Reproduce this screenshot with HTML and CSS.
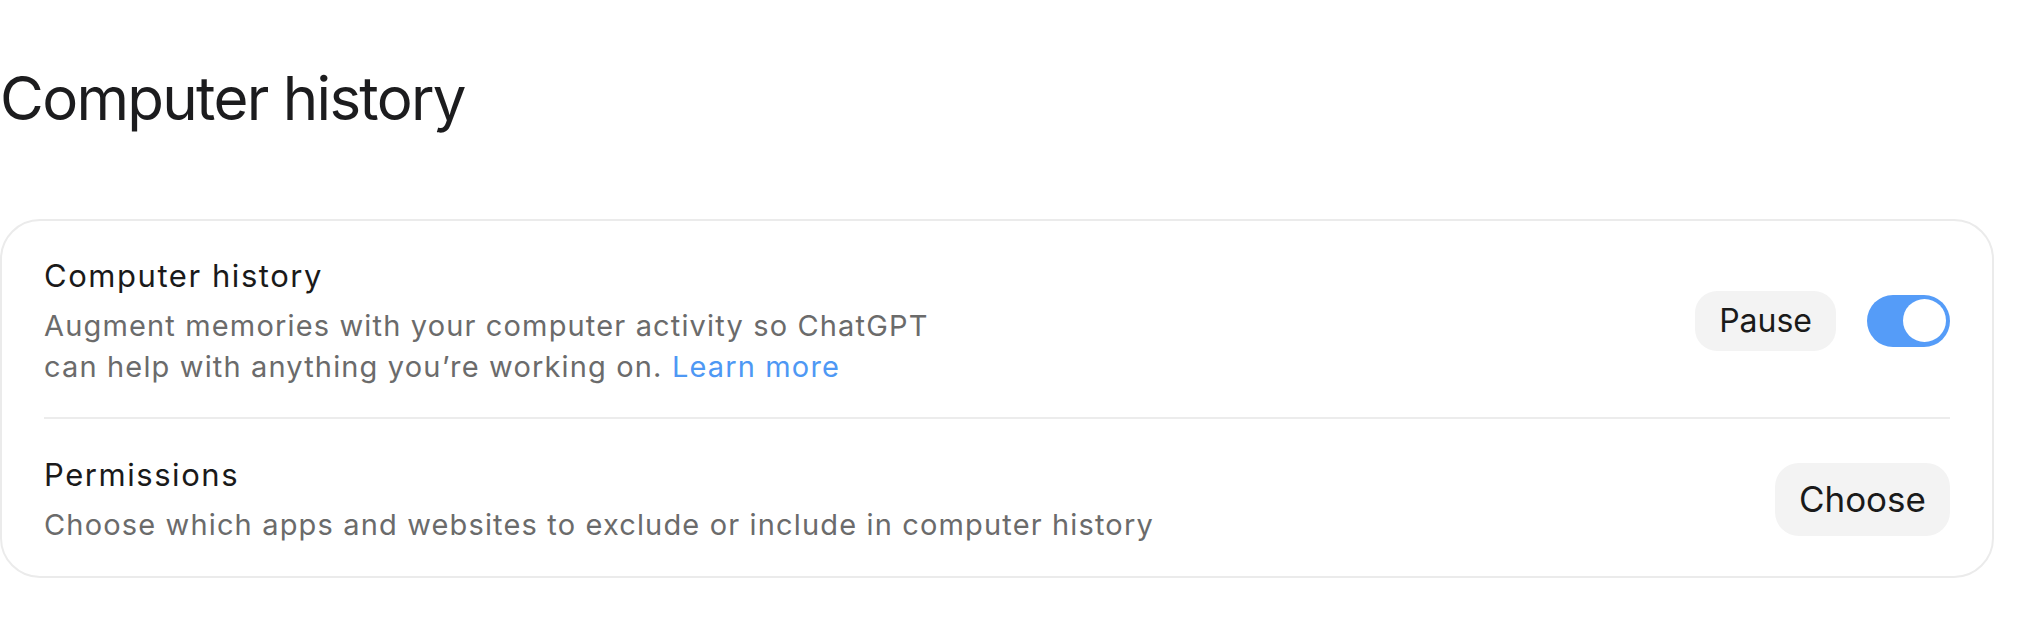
FILE: index.html
```html
<!DOCTYPE html>
<html lang="en">
<head>
<meta charset="utf-8">
<title>Computer history</title>
<link rel="stylesheet" href="styles.css">
</head>
<body>
<main class="page">
  <h1 class="page-title">Computer history</h1>
  <section class="card">
    <div class="row row-first">
      <div class="row-text">
        <div class="row-title">Computer history</div>
        <div class="row-desc">Augment memories with your computer activity so ChatGPT<br>can help with anything you’re working on. <a class="link" href="#">Learn more</a></div>
      </div>
      <div class="row-controls">
        <button class="btn btn-pause" type="button">Pause</button>
        <span class="toggle" role="switch" aria-checked="true"><span class="knob"></span></span>
      </div>
    </div>
    <div class="row">
      <div class="row-text">
        <div class="row-title">Permissions</div>
        <div class="row-desc">Choose which apps and websites to exclude or include in computer history</div>
      </div>
      <div class="row-controls">
        <button class="btn btn-choose" type="button">Choose</button>
      </div>
    </div>
  </section>
</main>
</body>
</html>
```
FILE: styles.css
```css
html, body {
  margin: 0;
  padding: 0;
  background: #ffffff;
}

body {
  font-family: Inter, "Noto Sans", "Liberation Sans", sans-serif;
  color: #1b1b1d;
}

.page {
  padding: 62px 24px 0 0;
}

.page-title {
  margin: 0;
  font-size: 60px;
  line-height: 72px;
  font-weight: 400;
  color: #1c1c1e;
  letter-spacing: -1.7px;
}

.card {
  margin-top: 85px;
  border: 2px solid #ebebeb;
  border-radius: 40px;
  padding: 0 42px;
}

.row {
  display: flex;
  align-items: center;
  justify-content: space-between;
  padding: 34px 0 31px;
}

.row-first {
  padding: 33px 0 30px;
  border-bottom: 2px solid #ececec;
}

.row-text {
  display: flex;
  flex-direction: column;
  gap: 7px;
}

.row-title {
  font-size: 31px;
  line-height: 44px;
  color: #1a1a1a;
  letter-spacing: 1.55px;
}

.row-desc {
  font-size: 29px;
  line-height: 41px;
  color: #6b6b6b;
  letter-spacing: 1.15px;
}

.link {
  color: #4e98f4;
  text-decoration: none;
}

.row-controls {
  display: flex;
  align-items: center;
  gap: 31px;
}

.btn {
  border: none;
  background: #f3f3f3;
  color: #1a1a1a;
  font-family: inherit;
  padding: 0 24px;
  cursor: pointer;
}

.btn-pause {
  height: 60px;
  font-size: 32px;
  border-radius: 22px;
}

.btn-choose {
  height: 73px;
  font-size: 35px;
  border-radius: 24px;
}

.toggle {
  display: flex;
  align-items: center;
  justify-content: flex-end;
  width: 83px;
  height: 52px;
  box-sizing: border-box;
  padding: 0 4.5px;
  border-radius: 26px;
  background: #559cf8;
}

.knob {
  width: 43px;
  height: 43px;
  border-radius: 50%;
  background: #ffffff;
}
```
